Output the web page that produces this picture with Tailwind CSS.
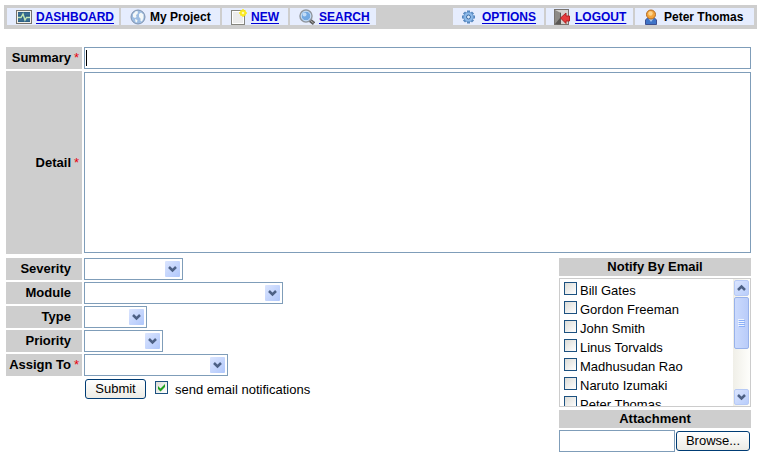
<!DOCTYPE html>
<html lang="en">
<head>
  <meta charset="UTF-8" />
  <meta name="viewport" content="width=device-width, initial-scale=1.0"/>
  <title>My Project</title>
  <script src="https://cdn.jsdelivr.net/npm/@tailwindcss/browser@4"></script>
</head>
<body class="bg-white text-black font-['Liberation_Sans',Arial,sans-serif] text-[13px] leading-4">

  <!-- Top menu -->
  <nav class="ml-1 mr-2 mt-[5px] p-[3px] pb-1 h-6 bg-[#cecece] flex justify-between text-[12px] font-bold whitespace-nowrap">
    <div class="flex gap-0.5">
      <div class="w-[112px] pl-[9px] bg-[#e6edfe] flex items-center gap-1">
        <svg class="w-4 h-4 shrink-0" viewBox="0 0 16 16">
          <rect x="0.5" y="1.5" width="15" height="13" fill="#f2f1ea" stroke="#77736c"/>
          <rect x="2" y="3" width="12" height="10" fill="#2d6186"/>
          <path d="M2 5h12M2 11h12" stroke="#47799a"/>
          <path d="M2 8.500h3L7 5l2 6 1.500-2.500H14" fill="none" stroke="#c3e6b4" stroke-width="1.400"/>
        </svg>
        <a href="#" class="text-[#0000d6] underline underline-offset-2">DASHBOARD</a>
      </div>
      <div class="w-[99px] pl-[9px] bg-[#e6edfe] flex items-center gap-1">
        <svg class="w-4 h-4 shrink-0" viewBox="0 0 16 16">
          <circle cx="8" cy="8" r="7" fill="#9dbde2" stroke="#7f92ad"/>
          <path d="M3 5l3-3 2 .5L7.500 5 6 6l.5 2L5 9 3 8zM9 5l2-1.500 2.500 2V9L12 12.500 10.500 12V9.500L9 8zM5 10l2.500 1L7 13.500 5.500 13z" fill="#f4f8f8"/>
        </svg>
        <span>My Project</span>
      </div>
      <div class="w-[66px] pl-[9px] bg-[#e6edfe] flex items-center gap-1">
        <svg class="w-4 h-4 shrink-0" viewBox="0 0 16 16">
          <rect x="0.5" y="1.5" width="13" height="14" fill="#ececec" stroke="#85857f"/>
          <path d="M1.500 2.500h11v12h-11z" fill="none" stroke="#fff"/>
          <circle cx="12" cy="4" r="3" fill="#fbe91e"/>
          <path d="M12 0v8M8 4h8M9.500 1.500l5 5M14.500 1.500l-5 5" stroke="#fbe91e" stroke-width="1.500"/>
          <circle cx="12" cy="4" r="1.300" fill="#fffbb0"/>
        </svg>
        <a href="#" class="text-[#0000d6] underline underline-offset-2">NEW</a>
      </div>
      <div class="w-[86px] pl-[9px] bg-[#e6edfe] flex items-center gap-1">
        <svg class="w-4 h-4 shrink-0" viewBox="0 0 16 16">
          <path d="M10.500 11l4.500 3.500" stroke="#5e5e5e" stroke-width="3.500"/>
          <path d="M12 12l2.500 2" stroke="#b5b5b0"/>
          <circle cx="7" cy="7" r="6" fill="#73a9e2" stroke="#92979d" stroke-width="1.500"/>
          <circle cx="7" cy="7" r="4.800" fill="none" stroke="#d3e4f6"/>
          <circle cx="5.500" cy="5.500" r="2" fill="#c3dcf6"/>
        </svg>
        <a href="#" class="text-[#0000d6] underline underline-offset-2">SEARCH</a>
      </div>
    </div>
    <div class="flex gap-0.5">
      <div class="w-[91px] pl-2 bg-[#e6edfe] flex items-center gap-[5px]">
        <svg class="w-4 h-4 shrink-0" viewBox="0 0 16 16">
          <path d="M7.500 1.500v13M1 8h13M3 3.500l9 9M12 3.500l-9 9" stroke="#5586bd" stroke-width="3"/>
          <circle cx="7.500" cy="8" r="4.800" fill="#8dbaea" stroke="#6a9bd2"/>
          <circle cx="7.500" cy="8" r="2" fill="#dce9fa" stroke="#3c6ca4"/>
        </svg>
        <a href="#" class="text-[#0000d6] underline underline-offset-2">OPTIONS</a>
      </div>
      <div class="w-[87px] pl-2 bg-[#e6edfe] flex items-center gap-[5px]">
        <svg class="w-4 h-4 shrink-0" viewBox="0 0 16 16">
          <rect x="0.500" y="0.500" width="14" height="15" fill="#d5d3cf" stroke="#77736f"/>
          <path d="M1 1l6 3v11.500L1 15z" fill="#8d8a86"/>
          <path d="M7 4v11.500h-3L1 15l5-6V3.500z" fill="#5a5754"/>
          <path d="M6.500 9L12 4v3h3.500v5H12v2.500z" fill="#e63b3b" stroke="#b02020"/>
        </svg>
        <a href="#" class="text-[#0000d6] underline underline-offset-2">LOGOUT</a>
      </div>
      <div class="w-[119px] pl-2 bg-[#e6edfe] flex items-center gap-[5px]">
        <svg class="w-4 h-4 shrink-0" viewBox="0 0 16 16">
          <path d="M2.500 15.500V11L5 8.500h6l2.500 2.500v4.500z" fill="#3f73c6" stroke="#3d4f90"/>
          <path d="M5.500 9.500L8 13l2.500-3.500z" fill="#a9c8f0"/>
          <circle cx="8" cy="5.500" r="4.500" fill="#f3a43c" stroke="#b36a22"/>
          <circle cx="7.500" cy="4.500" r="2.200" fill="#ffd38a"/>
        </svg>
        <span>Peter Thomas</span>
      </div>
    </div>
  </nav>

  <form class="ml-1.5 mr-3.5 mt-[18px]">
    <div class="grid grid-cols-[76px_1fr] gap-0.5">
      <label for="summary" class="bg-[#cecece] h-[22px] flex items-center justify-end font-bold pr-[3px]">Summary<span class="w-2 pl-[3px] font-normal text-red-600">*</span></label>
      <div class="relative">
        <input id="summary" type="text" class="block w-full h-[22px] border border-[#7f9db9] px-0.5 outline-none"/>
        <span class="absolute left-0.5 top-[3px] w-px h-4 bg-black"></span>
      </div>
      <label for="detail" class="bg-[#cecece] flex items-center justify-end font-bold pr-[3px]">Detail<span class="w-2 pl-[3px] font-normal text-red-600">*</span></label>
      <div class="py-px">
        <textarea id="detail" class="block w-full h-[181px] border border-[#7f9db9] px-0.5 outline-none resize-none"></textarea>
      </div>
    </div>

    <div class="mt-1 flex justify-between items-start">
      <div class="grid grid-cols-[76px_auto] gap-0.5">
        <label for="severity" class="bg-[#cecece] h-[22px] flex items-center justify-end font-bold pr-[11px]">Severity</label>
        <div class="relative w-[99px]">
          <select id="severity" class="block w-full h-[22px] appearance-none border border-[#7f9db9] bg-white"><option></option></select>
          <svg class="absolute right-[3px] top-[3px] w-[15px] h-4 pointer-events-none rounded-[1px] bg-linear-to-br from-[#dbe5fe] to-[#b0c7fb]" viewBox="0 0 15 16"><path d="M4 6l3.500 3.500L11 6" fill="none" stroke="#4d6185" stroke-width="2.500"/></svg>
        </div>

        <label for="module" class="bg-[#cecece] h-[22px] flex items-center justify-end font-bold pr-[11px]">Module</label>
        <div class="relative w-[199px]">
          <select id="module" class="block w-full h-[22px] appearance-none border border-[#7f9db9] bg-white"><option></option></select>
          <svg class="absolute right-[3px] top-[3px] w-[15px] h-4 pointer-events-none rounded-[1px] bg-linear-to-br from-[#dbe5fe] to-[#b0c7fb]" viewBox="0 0 15 16"><path d="M4 6l3.500 3.500L11 6" fill="none" stroke="#4d6185" stroke-width="2.500"/></svg>
        </div>

        <label for="type" class="bg-[#cecece] h-[22px] flex items-center justify-end font-bold pr-[11px]">Type</label>
        <div class="relative w-[63px]">
          <select id="type" class="block w-full h-[22px] appearance-none border border-[#7f9db9] bg-white"><option></option></select>
          <svg class="absolute right-[3px] top-[3px] w-[15px] h-4 pointer-events-none rounded-[1px] bg-linear-to-br from-[#dbe5fe] to-[#b0c7fb]" viewBox="0 0 15 16"><path d="M4 6l3.500 3.500L11 6" fill="none" stroke="#4d6185" stroke-width="2.500"/></svg>
        </div>

        <label for="priority" class="bg-[#cecece] h-[22px] flex items-center justify-end font-bold pr-[11px]">Priority</label>
        <div class="relative w-[79px]">
          <select id="priority" class="block w-full h-[22px] appearance-none border border-[#7f9db9] bg-white"><option></option></select>
          <svg class="absolute right-[3px] top-[3px] w-[15px] h-4 pointer-events-none rounded-[1px] bg-linear-to-br from-[#dbe5fe] to-[#b0c7fb]" viewBox="0 0 15 16"><path d="M4 6l3.500 3.500L11 6" fill="none" stroke="#4d6185" stroke-width="2.500"/></svg>
        </div>

        <label for="assign" class="bg-[#cecece] h-[22px] flex items-center justify-end font-bold pr-[3px] whitespace-nowrap">Assign To<span class="w-2 pl-[3px] font-normal text-red-600">*</span></label>
        <div class="relative w-[144px]">
          <select id="assign" class="block w-full h-[22px] appearance-none border border-[#7f9db9] bg-white"><option></option></select>
          <svg class="absolute right-[3px] top-[3px] w-[15px] h-4 pointer-events-none rounded-[1px] bg-linear-to-br from-[#dbe5fe] to-[#b0c7fb]" viewBox="0 0 15 16"><path d="M4 6l3.500 3.500L11 6" fill="none" stroke="#4d6185" stroke-width="2.500"/></svg>
        </div>

        <div class="col-start-2 pl-px pt-px flex items-start">
          <button type="submit" class="w-[61px] h-5 border border-[#003c74] rounded-[3px] bg-linear-to-b from-white to-[#ecebe5]">Submit</button>
          <input id="send" type="checkbox" checked class="peer ml-[9px] mt-0.5 w-[13px] h-[13px] appearance-none border border-[#1c5180] bg-linear-to-br from-[#dcdcd7] to-white"/>
          <svg class="-ml-[13px] mt-0.5 w-[13px] h-[13px] pointer-events-none invisible peer-checked:visible" viewBox="0 0 13 13"><path d="M3 5v3l2.500 2.500L10 6V3L5.500 7.500z" fill="#21a121"/></svg>
          <label for="send" class="ml-[7px] mt-[3px]">send email notifications</label>
        </div>
      </div>

      <div class="w-48">
        <div class="h-[18px] bg-[#cecece] font-bold text-center leading-[18px]">Notify By Email</div>
        <div class="mt-0.5 h-[129px] border border-[#cccccc] flex">
          <div class="flex-1 overflow-hidden pl-1 pt-[3px]">
            <label class="h-[19px] flex items-start gap-[3px]"><input type="checkbox" class="w-[13px] h-[13px] appearance-none border border-[#1c5180] bg-linear-to-br from-[#dcdcd7] to-white"/><span class="mt-px">Bill Gates</span></label>
            <label class="h-[19px] flex items-start gap-[3px]"><input type="checkbox" class="w-[13px] h-[13px] appearance-none border border-[#1c5180] bg-linear-to-br from-[#dcdcd7] to-white"/><span class="mt-px">Gordon Freeman</span></label>
            <label class="h-[19px] flex items-start gap-[3px]"><input type="checkbox" class="w-[13px] h-[13px] appearance-none border border-[#1c5180] bg-linear-to-br from-[#dcdcd7] to-white"/><span class="mt-px">John Smith</span></label>
            <label class="h-[19px] flex items-start gap-[3px]"><input type="checkbox" class="w-[13px] h-[13px] appearance-none border border-[#1c5180] bg-linear-to-br from-[#dcdcd7] to-white"/><span class="mt-px">Linus Torvalds</span></label>
            <label class="h-[19px] flex items-start gap-[3px]"><input type="checkbox" class="w-[13px] h-[13px] appearance-none border border-[#1c5180] bg-linear-to-br from-[#dcdcd7] to-white"/><span class="mt-px">Madhusudan Rao</span></label>
            <label class="h-[19px] flex items-start gap-[3px]"><input type="checkbox" class="w-[13px] h-[13px] appearance-none border border-[#1c5180] bg-linear-to-br from-[#dcdcd7] to-white"/><span class="mt-px">Naruto Izumaki</span></label>
            <label class="h-[19px] flex items-start gap-[3px]"><input type="checkbox" class="w-[13px] h-[13px] appearance-none border border-[#1c5180] bg-linear-to-br from-[#dcdcd7] to-white"/><span class="mt-px">Peter Thomas</span></label>
          </div>
          <!-- Scrollbar -->
          <div class="w-[17px] px-px flex flex-col bg-linear-to-r from-[#f0efe8] to-[#fefefb]">
            <button type="button" aria-label="Scroll up" class="h-4 mt-px border border-[#b7caf5] rounded-[2px] bg-linear-to-br from-[#dbe5fe] to-[#b8cdfb] flex items-center justify-center">
              <svg class="w-[9px] h-2" viewBox="0 0 9 8"><path d="M1 6l3.500-3.500L8 6" fill="none" stroke="#4d6185" stroke-width="2.500"/></svg>
            </button>
            <div class="mt-px h-[52px] border border-[#98b2ea] rounded-[2px] bg-linear-to-r from-[#cbdafd] to-[#b9ccf9] flex items-center justify-center">
              <svg class="w-[7px] h-2" viewBox="0 0 7 8"><path d="M0 .5h6M0 2.500h6M0 4.500h6M0 6.500h6" stroke="#eef4fe"/><path d="M1 1.500h6M1 3.500h6M1 5.500h6M1 7.500h6" stroke="#8cb0f8"/></svg>
            </div>
            <button type="button" aria-label="Scroll down" class="h-4 mt-auto mb-px border border-[#b7caf5] rounded-[2px] bg-linear-to-br from-[#dbe5fe] to-[#b8cdfb] flex items-center justify-center">
              <svg class="w-[9px] h-2" viewBox="0 0 9 8"><path d="M1 2l3.500 3.500L8 2" fill="none" stroke="#4d6185" stroke-width="2.500"/></svg>
            </button>
          </div>
        </div>
        <label for="attachment" class="block mt-[3px] h-[18px] bg-[#cecece] font-bold text-center leading-[18px]">Attachment</label>
        <div class="mt-0.5 flex items-center gap-px pr-px">
          <input id="attachment" type="text" class="flex-1 min-w-0 h-[22px] border border-[#7f9db9] px-0.5 outline-none"/>
          <button type="button" class="w-[74px] h-5 border border-[#003c74] rounded-[3px] bg-linear-to-b from-white to-[#ecebe5]">Browse...</button>
        </div>
      </div>
    </div>
  </form>
</body>
</html>
